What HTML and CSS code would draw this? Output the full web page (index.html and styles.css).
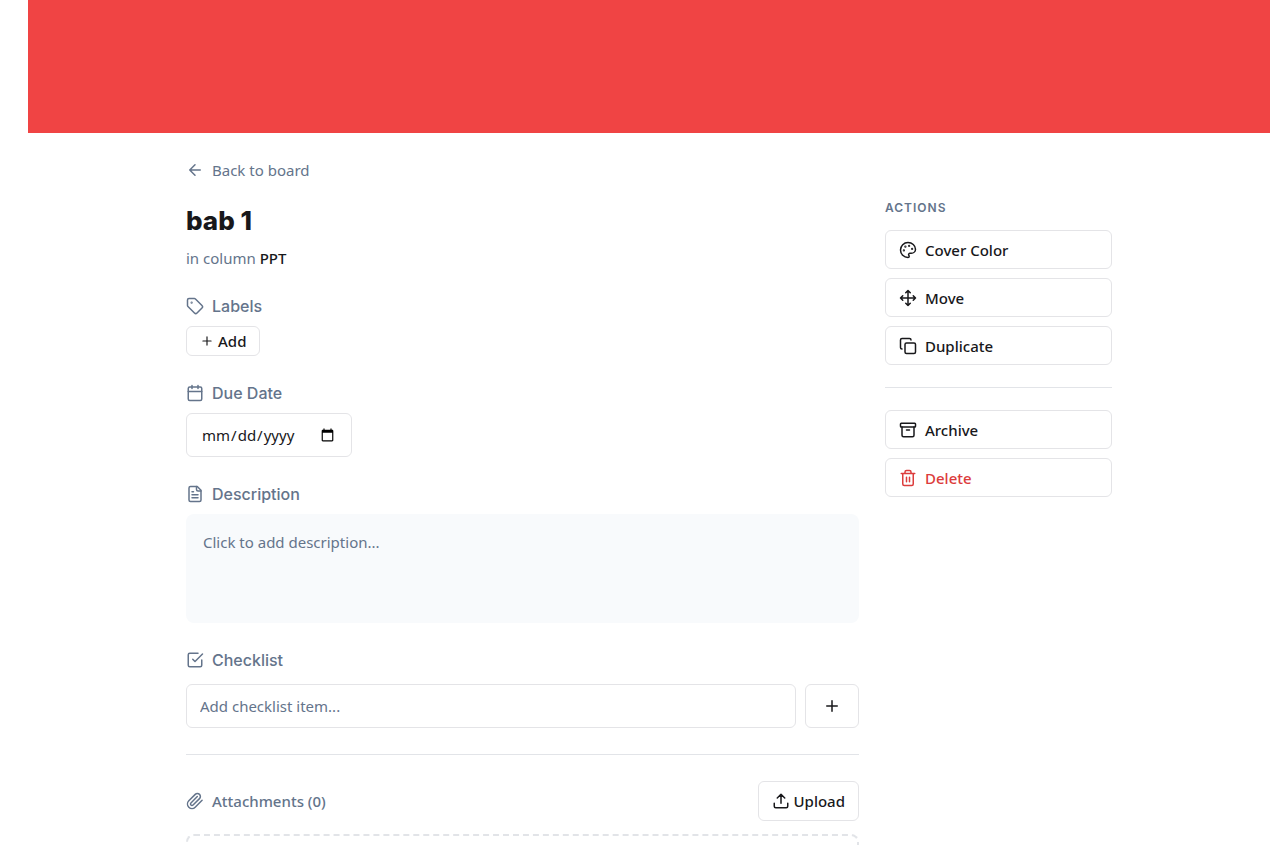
FILE: index.html
```html
<!DOCTYPE html>
<html lang="en">
<head>
<meta charset="utf-8">
<meta name="viewport" content="width=device-width, initial-scale=1">
<title>bab 1</title>
<link rel="stylesheet" href="styles.css">
</head>
<body>
<div class="page">
  <div class="cover"></div>
  <div class="container">
    <a class="back" href="#"><svg class="icon" viewBox="0 0 24 24"><path d="m12 19-7-7 7-7M19 12H5"/></svg>Back to board</a>
    <div class="columns">
      <main class="main">
        <h1 class="title">bab 1</h1>
        <p class="location">in column <span class="location-name">PPT</span></p>

        <section class="section">
          <h2 class="heading"><svg class="icon" viewBox="0 0 24 24"><path d="M12.586 2.586A2 2 0 0 0 11.172 2H4a2 2 0 0 0-2 2v7.172a2 2 0 0 0 .586 1.414l8.704 8.704a2.426 2.426 0 0 0 3.42 0l6.58-6.58a2.426 2.426 0 0 0 0-3.42z"/><circle class="dot" cx="7.5" cy="7.5" r=".5"/></svg>Labels</h2>
          <button class="button button-small" type="button"><svg class="icon icon-small" viewBox="0 0 24 24"><path d="M5 12h14M12 5v14"/></svg>Add</button>
        </section>

        <section class="section">
          <h2 class="heading"><svg class="icon" viewBox="0 0 24 24"><path d="M8 2v4M16 2v4M3 10h18"/><rect width="18" height="18" x="3" y="4" rx="2"/></svg><label for="due">Due Date</label></h2>
          <input class="field date" id="due" type="date">
        </section>

        <section class="section">
          <h2 class="heading"><svg class="icon" viewBox="0 0 24 24"><path d="M15 2H6a2 2 0 0 0-2 2v16a2 2 0 0 0 2 2h12a2 2 0 0 0 2-2V7Z"/><path d="M14 2v4a2 2 0 0 0 2 2h4M10 9H8M16 13H8M16 17H8"/></svg>Description</h2>
          <button class="description" type="button">Click to add description...</button>
        </section>

        <section class="section">
          <h2 class="heading heading-checklist"><svg class="icon" viewBox="0 0 24 24"><path d="m9 11 3 3L22 4"/><path d="M21 12v7a2 2 0 0 1-2 2H5a2 2 0 0 1-2-2V5a2 2 0 0 1 2-2h11"/></svg><label for="item">Checklist</label></h2>
          <form class="add-item">
            <input class="field item" id="item" type="text" placeholder="Add checklist item...">
            <button class="button button-plus" type="button" aria-label="Add item"><svg class="icon" viewBox="0 0 24 24"><path d="M5 12h14M12 5v14"/></svg></button>
          </form>
        </section>

        <hr class="rule rule-main">

        <section class="attachments">
          <div class="attachments-bar">
            <h2 class="heading heading-plain"><svg class="icon" viewBox="0 0 24 24"><path d="m21.44 11.05-9.19 9.19a6 6 0 0 1-8.49-8.49l8.57-8.57A4 4 0 1 1 18 8.84l-8.59 8.57a2 2 0 0 1-2.83-2.83l8.49-8.48"/></svg>Attachments (0)</h2>
            <button class="button button-upload" type="button"><svg class="icon" viewBox="0 0 24 24"><path d="M21 15v4a2 2 0 0 1-2 2H5a2 2 0 0 1-2-2v-4M17 8l-5-5-5 5M12 3v12"/></svg>Upload</button>
          </div>
          <div class="dropzone"></div>
        </section>
      </main>

      <aside class="side">
        <h2 class="side-title">ACTIONS</h2>
        <div class="actions">
          <button class="button action" type="button"><svg class="icon" viewBox="0 0 24 24"><circle class="dot" cx="13.5" cy="6.5" r=".5"/><circle class="dot" cx="17.5" cy="10.5" r=".5"/><circle class="dot" cx="8.5" cy="7.5" r=".5"/><circle class="dot" cx="6.5" cy="12.5" r=".5"/><path d="M12 2C6.5 2 2 6.5 2 12s4.5 10 10 10c.926 0 1.648-.746 1.648-1.688 0-.437-.18-.835-.437-1.125-.29-.289-.438-.652-.438-1.125a1.64 1.64 0 0 1 1.668-1.668h1.996c3.051 0 5.555-2.503 5.555-5.554C21.965 6.012 17.461 2 12 2z"/></svg>Cover Color</button>
          <button class="button action" type="button"><svg class="icon" viewBox="0 0 24 24"><path d="M12 2v20M2 12h20M15 19l-3 3-3-3M19 9l3 3-3 3M5 9l-3 3 3 3M9 5l3-3 3 3"/></svg>Move</button>
          <button class="button action" type="button"><svg class="icon" viewBox="0 0 24 24"><rect width="14" height="14" x="8" y="8" rx="2"/><path d="M4 16c-1.1 0-2-.9-2-2V4c0-1.1.9-2 2-2h10c1.1 0 2 .9 2 2"/></svg>Duplicate</button>
        </div>
        <hr class="rule rule-side">
        <div class="actions">
          <button class="button action" type="button"><svg class="icon" viewBox="0 0 24 24"><rect width="20" height="5" x="2" y="3" rx="1"/><path d="M4 8v11a2 2 0 0 0 2 2h12a2 2 0 0 0 2-2V8M10 12h4"/></svg>Archive</button>
          <button class="button action action-danger" type="button"><svg class="icon" viewBox="0 0 24 24"><path d="M3 6h18M19 6v14c0 1-1 2-2 2H7c-1 0-2-1-2-2V6M8 6V4c0-1 1-2 2-2h4c1 0 2 1 2 2v2M10 11v6M14 11v6"/></svg>Delete</button>
        </div>
      </aside>
    </div>
  </div>
</div>
</body>
</html>
```

FILE: styles.css
```css
* {
  box-sizing: border-box;
  margin: 0;
}

body {
  background: #fff;
  color: #18181b;
  font: 400 15px/22px "Noto Sans", sans-serif;
}

button,
input {
  color: inherit;
  font: inherit;
}

.page {
  height: 100vh;
  overflow: hidden;
  padding: 0 10px 0 28px;
}

.cover {
  height: 133px;
  background: #f04444;
}

.container {
  max-width: 926px;
  margin: 0 auto;
  padding-top: 26px;
}

.icon {
  flex: none;
  width: 18px;
  height: 18px;
  fill: none;
  stroke: currentColor;
  stroke-width: 2;
  stroke-linecap: round;
  stroke-linejoin: round;
}

.icon-small {
  width: 14px;
  height: 14px;
}

.dot {
  fill: currentColor;
}

.back {
  display: inline-flex;
  align-items: center;
  gap: 8px;
  color: #64748b;
  text-decoration: none;
}

.columns {
  display: grid;
  grid-template-columns: minmax(0, 1fr) 227px;
  gap: 26px;
  padding-top: 15px;
}

.title {
  padding-top: 4px;
  font: 800 26px/36px Inter, sans-serif;
}

.location {
  margin-top: 8px;
  color: #64748b;
}

.location-name {
  color: #18181b;
  font-weight: 500;
}

.section {
  margin-top: 26px;
}

.heading {
  display: flex;
  align-items: center;
  gap: 8px;
  margin-bottom: 9px;
  color: #64748b;
  font: 500 16px/22px Inter, sans-serif;
}

.heading-checklist {
  margin-bottom: 13px;
}

.heading-plain {
  margin: 0;
  font: 500 15px/22px "Noto Sans", sans-serif;
}

.button {
  display: flex;
  align-items: center;
  border: 1px solid #e4e4e7;
  border-radius: 6px;
  background: #fff;
  font-weight: 500;
}

.button-small {
  height: 30px;
  gap: 4px;
  padding: 0 13px;
}

.field {
  height: 44px;
  border: 1px solid #e4e4e7;
  border-radius: 6px;
  background: #fff;
}

.date {
  display: block;
  width: 166px;
  padding: 0 14px;
}

.description {
  display: flex;
  align-items: flex-start;
  width: 100%;
  min-height: 109px;
  padding: 17px;
  border: 0;
  border-radius: 8px;
  background: #f8fafc;
  color: #64748b;
}

.add-item {
  display: flex;
  gap: 9px;
}

.item {
  flex: 1;
  min-width: 0;
  padding: 0 13px;
}

.item::placeholder {
  color: #64748b;
}

.button-plus {
  justify-content: center;
  width: 54px;
  padding: 0;
}

.rule {
  height: 1px;
  border: 0;
  background: #e2e4e8;
}

.rule-main {
  margin: 26px 0;
}

.rule-side {
  margin: 22px 0;
}

.attachments-bar {
  display: flex;
  align-items: center;
  justify-content: space-between;
}

.button-upload {
  height: 40px;
  gap: 4px;
  padding: 0 13px;
}

.dropzone {
  height: 120px;
  margin-top: 13px;
  border: 2px dashed #e2e4e8;
  border-radius: 8px;
}

.side-title {
  margin-bottom: 13px;
  color: #64748b;
  font: 600 12px/18px Inter, sans-serif;
  letter-spacing: 1px;
}

.actions {
  display: grid;
  gap: 9px;
}

.action {
  height: 39px;
  gap: 8px;
  padding: 0 13px;
}

.action-danger {
  color: #dc3c3c;
}
```
